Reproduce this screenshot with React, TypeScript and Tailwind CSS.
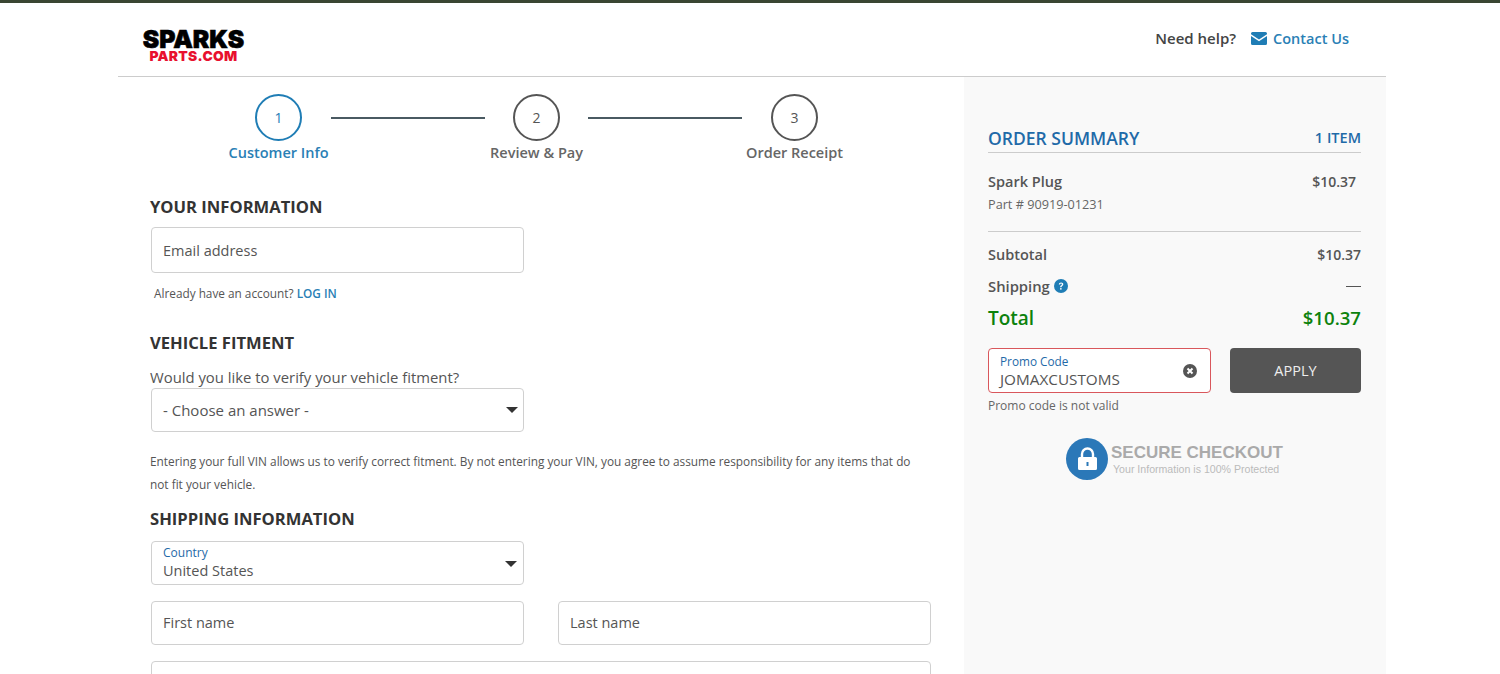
const font = "font-['Open_Sans','Noto_Sans',sans-serif]";

const Caret = () => (
  <svg width="12" height="6" viewBox="0 0 12 6" className="absolute right-[6px] top-[19px]">
    <path d="M0 0h12L6 6z" fill="#333" />
  </svg>
);

const Field = ({ label, className = "" }: { label: string; className?: string }) => (
  <div className={`h-[44px] rounded-[4px] border border-[#d0d0d0] bg-white pl-[11px] flex items-center text-[14.5px] text-[#555] ${className}`}>
    {label}
  </div>
);

const Step = ({ n, label, active }: { n: number; label: string; active?: boolean }) => (
  <div className="w-[47px] flex flex-col items-center">
    <div
      className={`w-[47px] h-[47px] shrink-0 rounded-full border-2 flex items-center justify-center text-[14px] font-medium ${
        active ? "border-[#1f7db5] text-[#1f7db5]" : "border-[#555] text-[#555]"
      }`}
    >
      {n}
    </div>
    <div className={`mt-[2px] whitespace-nowrap text-[14.5px] font-semibold leading-5 ${active ? "text-[#2a80b5]" : "text-[#666]"}`}>
      {label}
    </div>
  </div>
);

const Line = ({ left, right }: { left: string; right: string }) => (
  <div className={`h-[2px] w-[154px] mt-[23px] bg-[#4a5a62] ${left} ${right}`} />
);

const Heading = ({ children, className = "" }: { children: string; className?: string }) => (
  <h2 className={`text-[16.6px] leading-6 font-bold text-[#333] ${className}`}>{children}</h2>
);

export default function App() {
  return (
    <div className={`${font} h-screen overflow-hidden bg-white`}>
      <div className="h-[3px] bg-[#3a4632]" />
      <div className="w-[1268px] ml-[118px]">
        <header className="h-[74px] border-b border-[#ccc] flex items-center justify-between pl-6 pr-[37px]">
          <div className="flex flex-col items-center w-[103px] mt-[12px]">
            <span className="font-['Inter',sans-serif] font-black text-[24.7px] leading-[20px] text-black [-webkit-text-stroke:0.6px_black]">SPARKS</span>
            <span className="font-['Inter',sans-serif] font-black text-[13.8px] leading-[14px] tracking-[0.3px] text-[#e8102e]">PARTS.COM</span>
          </div>
          <div className="flex items-center text-[14.5px] font-semibold -mt-[2px]">
            <span className="text-[#444] text-[15px]">Need help?</span>
            <svg width="16" height="13" viewBox="0 0 16 13" className="ml-[15px] mr-[6px]">
              <path d="M0 1.5A1.5 1.5 0 0 1 1.500 0h13A1.500 1.500 0 0 1 16 1.500v.7L8 7.500 0 2.200z" fill="#1f7db5" />
              <path d="M0 4l8 5.300L16 4v7.500a1.500 1.500 0 0 1-1.500 1.500h-13A1.500 1.500 0 0 1 0 11.500z" fill="#1f7db5" />
            </svg>
            <span className="text-[#2a80b5]">Contact Us</span>
          </div>
        </header>

        <div className="flex">
          <main className="w-[846px] pl-[32px]">
            <div className="flex pl-[105px] pt-[17px]">
              <Step n={1} label="Customer Info" active />
              <Line left="ml-[29px]" right="mr-[28px]" />
              <Step n={2} label="Review & Pay" />
              <Line left="ml-[28px]" right="mr-[29px]" />
              <Step n={3} label="Order Receipt" />
            </div>

            <Heading className="mt-[32px]">YOUR INFORMATION</Heading>
            <Field label="Email address" className="ml-px mt-[8px] w-[373px] h-[46px] pt-px" />
            <p className="mt-[12px] pl-1 text-[11.8px] leading-4 text-[#555]">
              Already have an account? <span className="font-semibold text-[#2a80b5]">LOG IN</span>
            </p>

            <Heading className="mt-[30px]">VEHICLE FITMENT</Heading>
            <p className="mt-[12px] text-[14.85px] leading-5 text-[#555] whitespace-nowrap">Would you like to verify your vehicle fitment?</p>
            <div className="relative ml-px mt-[1px] w-[373px]">
              <Field label="- Choose an answer -" className="text-[15px]" />
              <Caret />
            </div>
            <p className="mt-[18px] w-[781px] text-[11.83px] leading-[23px] text-[#555]">
              Entering your full VIN allows us to verify correct fitment. By not entering your VIN, you agree to assume responsibility for any items that do
              <br />
              not fit your vehicle.
            </p>

            <Heading className="mt-[11px]">SHIPPING INFORMATION</Heading>
            <div className="relative ml-px mt-[10px] w-[373px] h-[44px] rounded-[4px] border border-[#d0d0d0] bg-white pl-[11px] pt-[3px]">
              <div className="text-[12px] leading-[15px] text-[#1f6aa8]">Country</div>
              <div className="mt-px text-[14.5px] leading-[20px] text-[#555]">United States</div>
              <Caret />
            </div>
            <div className="ml-px mt-[16px] grid grid-cols-[373px_373px] gap-x-[34px] gap-y-[16px] w-[780px]">
              <Field label="First name" />
              <Field label="Last name" />
              <div className="col-span-2 h-[44px] rounded-[4px] border border-[#d0d0d0] bg-white" />
            </div>
          </main>

          <aside className="w-[422px] h-[600px] bg-[#f9f9f9] pl-6 pr-[25px] pt-[50px]">
            <div className="flex justify-between items-start border-b border-[#ccc] h-[26px]">
              <span className="-mt-px text-[17.5px] leading-6 font-semibold text-[#1f6aa8]">ORDER SUMMARY</span>
              <span className="mt-px text-[14.5px] leading-5 font-semibold text-[#1f6aa8]">1 ITEM</span>
            </div>
            <div className="flex justify-between items-center pr-[5px] mt-[19px] text-[14.5px] leading-5 font-semibold text-[#555]">
              <span>Spark Plug</span>
              <span className="text-[14px]">$10.37</span>
            </div>
            <div className="mt-[2px] text-[12.7px] leading-5 text-[#666]">Part # 90919-01231</div>
            <div className="mt-[17px] border-t border-[#ccc]" />
            <div className="flex justify-between items-center mt-[13px] text-[14.5px] leading-5 font-semibold text-[#555]">
              <span>Subtotal</span>
              <span className="text-[14px]">$10.37</span>
            </div>
            <div className="flex justify-between items-center mt-[11px] text-[14.5px] leading-5 font-semibold text-[#555]">
              <span className="flex items-center gap-[4px] text-[14.8px]">
                Shipping
                <svg width="14" height="14" viewBox="0 0 14 14">
                  <circle cx="7" cy="7" r="7" fill="#1f7db5" />
                  <path d="M4.800 5.400c.1-1.300 1-2 2.300-2s2.200.7 2.200 1.800c0 1.700-1.800 1.600-1.800 3H6.100c0-2 1.800-1.900 1.800-3 0-.4-.3-.7-.8-.7-.6 0-.9.300-1 .9z" fill="#fff" />
                  <rect x="6.100" y="9.100" width="1.500" height="1.500" fill="#fff" />
                </svg>
              </span>
              <span className="w-[15px] h-[1px] bg-[#555]" />
            </div>
            <div className="flex justify-between mt-[9px] text-[19px] leading-[26px] font-semibold text-[#0d820d]">
              <span>Total</span>
              <span className="text-[18.6px]">$10.37</span>
            </div>
            <div className="flex justify-between mt-[17px]">
              <div className="relative w-[223px] h-[45px] rounded-[4px] border border-[#d9575c] bg-white pl-[11px] pt-[5px]">
                <div className="text-[11.8px] leading-[15px] text-[#1f6aa8]">Promo Code</div>
                <div className="text-[15.3px] leading-[20px] text-[#555]">JOMAXCUSTOMS</div>
                <svg width="14" height="14" viewBox="0 0 14 14" className="absolute right-[13px] top-[15px]">
                  <circle cx="7" cy="7" r="7" fill="#555" />
                  <path d="M4.500 4.500l5 5M9.500 4.500l-5 5" stroke="#fff" strokeWidth="2" />
                </svg>
              </div>
              <div className="w-[131px] h-[45px] rounded-[4px] bg-[#555] flex items-center justify-center text-[14.5px] font-medium text-[#eee]">APPLY</div>
            </div>
            <div className="mt-[3px] text-[12px] leading-5 text-[#666]">Promo code is not valid</div>
            <div className="flex items-center mt-[22px] ml-[78px]">
              <div className="w-[42px] h-[42px] rounded-full bg-[#2b78b8] flex items-center justify-center">
                <svg width="19" height="24" viewBox="0 0 19 24">
                  <path d="M4 10V7a5.500 5.500 0 0 1 11 0v3" fill="none" stroke="#fff" strokeWidth="2.400" />
                  <path fillRule="evenodd" d="M1.500 10h16a1.500 1.500 0 0 1 1.500 1.500v10a1.500 1.500 0 0 1-1.500 1.500h-16A1.500 1.500 0 0 1 0 21.500v-10A1.500 1.500 0 0 1 1.500 10zM8.500 15v4h2v-4z" fill="#fff" />
                </svg>
              </div>
              <div className="ml-[3px] -mt-[1px] font-['Liberation_Sans',sans-serif]">
                <div className="text-[17px] leading-[20px] font-bold text-[#aaa] whitespace-nowrap">SECURE CHECKOUT</div>
                <div className="ml-[2px] text-[10.6px] leading-[12px] text-[#bbb] whitespace-nowrap">Your Information is 100% Protected</div>
              </div>
            </div>
          </aside>
        </div>
      </div>
    </div>
  );
}
